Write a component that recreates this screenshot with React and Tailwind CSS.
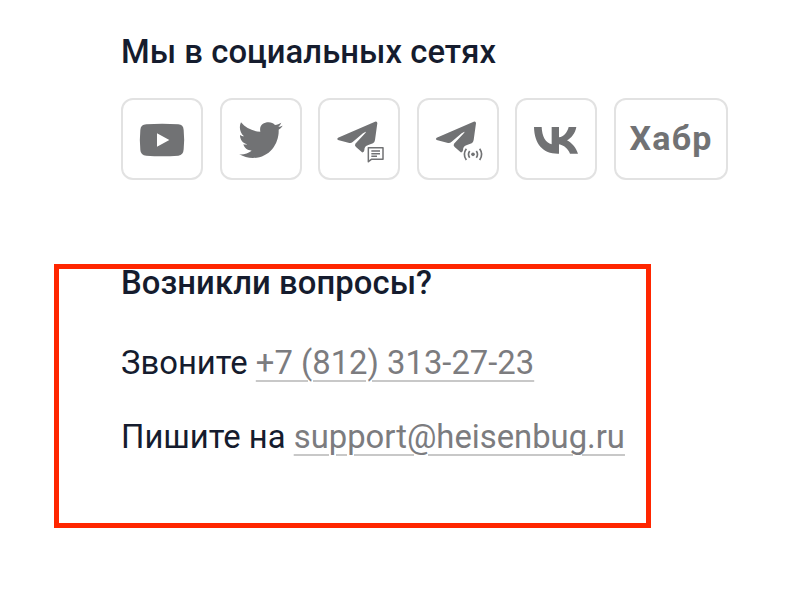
import React from "react";

const PLANE = "M84 143 Q79 147 84 150 L118 159 Q124 160 128 156 L159 130 Q172 121 166 129 L136 161 Q133 166 138 171 L156 187 Q162 188 163 181 Q163 168 175 165 L189 160 Q194 157 195 150 L202 100 Q202 93 195 95 Z";

function Card({ label, viewBox, children }) {
  return (
    <a
      href="#"
      aria-label={label}
      className="block h-[82px] w-[82px] shrink-0 rounded-[12px] border-2 border-[#e2e2e2] text-[#717274]"
    >
      <svg viewBox={viewBox} className="block h-[78px] w-[78px]" fill="currentColor">
        {children}
      </svg>
    </a>
  );
}

export default function App() {
  return (
    <main className="relative h-[590px] w-[796px] overflow-hidden bg-white pl-[121px] pt-[32px] font-['Roboto',sans-serif] text-[#151c2e]">
      <h2 className="h-[40px] whitespace-nowrap text-[32.8px] leading-[41px] font-medium tracking-[0.05px]">
        Мы в социальных сетях
      </h2>
      <nav className="mt-[26px] flex gap-[16.5px]">
        <Card label="YouTube" viewBox="24 30 234 234">
          <path
            fillRule="evenodd"
            d="M94 103 Q141 99 190 103 Q205 104 206 120 Q209 150 206 178 Q205 196 190 197 Q141 201 94 197 Q77 196 76 180 Q73 150 76 120 Q77 104 94 103 Z M126 130 V170 L163 150 Z"
          />
        </Card>
        <Card label="Twitter" viewBox="30 30 234 234">
          <path d="M87 97 C101 114 122 124 145 125 C141 106 154 97 170 97 C178 97 184 100 189 105 C196 104 202 101 208 98 C206 103 203 107 199 110 C204 110 208 108 212 107 C209 112 205 116 200 119 C202 160 173 204 123 204 C108 204 94 200 82 193 C96 194 109 190 119 182 C106 181 97 174 94 163 C98 164 102 164 106 163 C92 160 84 149 84 135 C88 137 92 139 96 139 C84 130 80 111 87 97 Z" />
        </Card>
        <Card label="Telegram" viewBox="30 30 234 234">
          <path d={PLANE} />
          <path
            d="M175 173 H219 V208 H184 L175 215 Z M184 183 H210 M184 191 H210 M184 199 H201"
            fill="none"
            stroke="currentColor"
            strokeWidth="4.5"
            strokeLinejoin="round"
          />
        </Card>
        <Card label="Telegram" viewBox="33 30 234 234">
          <path d={PLANE} transform="translate(2 0)" />
          <circle cx="195" cy="193" r="5.5" />
          <path
            d="M185 183 Q178 193 185 203 M205 183 Q212 193 205 203 M175 176 Q163 193 175 210 M215 176 Q227 193 215 210"
            fill="none"
            stroke="currentColor"
            strokeWidth="5"
          />
        </Card>
        <Card label="VK" viewBox="27 30 234 234">
          <path d="M78 111 H101 C102 139 113 159 131 163 V111 H153 V142 C167 140 178 127 182 111 H205 C202 130 189 145 177 151 C191 158 204 173 210 191 H186 C180 176 168 166 153 163 V191 H149 C105 191 79 162 78 111 Z" />
        </Card>
        <a
          href="#"
          className="flex h-[82px] w-[114px] shrink-0 items-center justify-center rounded-[12px] border-2 border-[#e2e2e2] pb-[3px] pl-[1px] text-[34px] leading-none font-bold tracking-[1.3px] text-[#717274]"
        >
          Хабр
        </a>
      </nav>
      <section className="mt-[83px] whitespace-nowrap text-[32.8px] leading-[40px]">
        <h2 className="font-medium tracking-[0.08px]">Возникли вопросы?</h2>
        <p className="mt-[40px]">
          Звоните{" "}
          <a href="#" className="text-[#7c7c7f] underline decoration-[#c8c8c8] decoration-2 underline-offset-[6px]">
            +7 (812) 313-27-23
          </a>
        </p>
        <p className="mt-[34px]">
          Пишите на{" "}
          <a href="#" className="text-[#7c7c7f] underline decoration-[#c8c8c8] decoration-2 underline-offset-[6px]">
            support@heisenbug.ru
          </a>
        </p>
      </section>
      <div className="pointer-events-none absolute left-[54px] top-[264px] h-[264px] w-[597px] border-[5px] border-[#ff2600]" />
    </main>
  );
}
